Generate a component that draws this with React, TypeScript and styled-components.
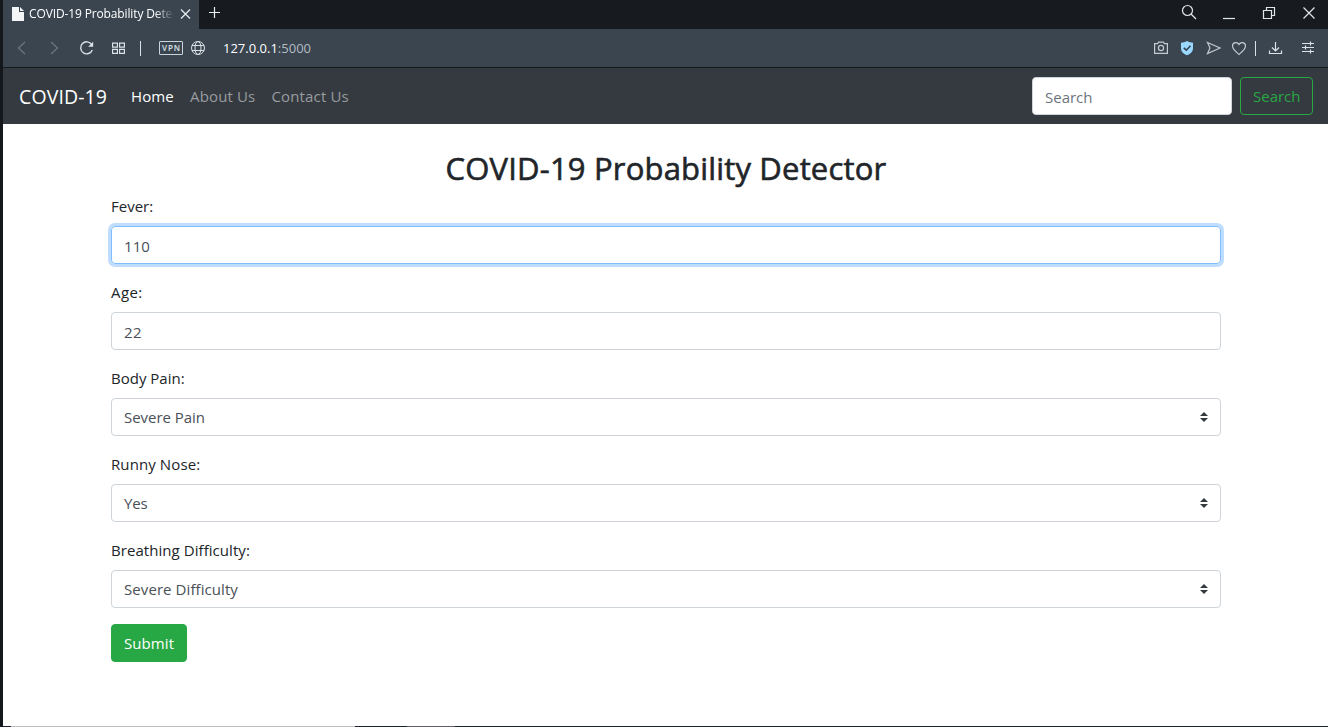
import React from "react";
import styled, { createGlobalStyle } from "styled-components";

const Global = createGlobalStyle`
  *, *::before, *::after { box-sizing: border-box; }
  html, body { margin: 0; padding: 0; background: #fff; overflow: hidden; }
  body { font-family: "Open Sans", "Noto Sans", sans-serif; font-size: 15px; line-height: 24px; color: #212529; }
  svg { display: block; flex-shrink: 0; }
`;

const Window = styled.div`
  width: 1328px;
  height: 727px;
  display: flex;
  flex-direction: column;
  border-left: 3px solid #14181d;
  background: #fff;
`;
const Text = styled.span<{ $ls?: number }>`
  letter-spacing: ${(p) => p.$ls ?? 0}px;
  white-space: pre;
`;

/* Browser chrome */
const TabBar = styled.div`
  height: 29px;
  flex-shrink: 0;
  display: flex;
  justify-content: space-between;
  background: #171b1f;
`;
const TabGroup = styled.div`display: flex;`;
const Tab = styled.div`
  width: 196px;
  display: flex;
  align-items: center;
  padding: 0 7px 2px 9px;
  background: #3a4550;
  color: #fff;
`;
const TabTitle = styled.div`
  width: 146px;
  margin-left: 5px;
  margin-right: 5px;
  font-size: 12px;
  line-height: 18px;
  overflow: hidden;
  mask-image: linear-gradient(90deg, #000 126px, transparent 145px);
`;
const NewTab = styled.div`padding: 6px 0 0 9px;`;
const WindowButtons = styled.div`
  display: flex;
  gap: 16px;
  padding: 1px 7px 0 0;
`;
const Toolbar = styled.div`
  height: 39px;
  flex-shrink: 0;
  display: flex;
  justify-content: space-between;
  background: #3a4550;
  border-bottom: 1px solid #15191c;
`;
const ToolGroup = styled.div`
  display: flex;
  align-items: center;
`;
const Divider = styled.i<{ $l: number; $r: number }>`
  width: 1px;
  height: 15px;
  margin: 0 ${(p) => p.$r}px 0 ${(p) => p.$l}px;
  background: #d9e1e7;
`;
const Vpn = styled.div`
  width: 24px;
  height: 14px;
  border: 1px solid #cbd4da;
  border-radius: 1px;
  color: #dbe2e7;
  font: 600 8px/12px "Open Sans", sans-serif;
  letter-spacing: 0.9px;
  text-align: center;
  padding-left: 1px;
`;
const Url = styled.div`
  margin-left: 9px;
  font-size: 13px;
  line-height: 20px;
  color: #fff;
`;
const Port = styled(Text)`color: #b3bcc4;`;

/* Site navigation */
const Navbar = styled.nav`
  height: 56px;
  flex-shrink: 0;
  display: flex;
  align-items: center;
  padding: 0 15px 0 16px;
  background: #343a40;
`;
const Brand = styled.a`
  width: 88px;
  margin-right: 24px;
  padding-top: 2px;
  font-size: 19.5px;
  line-height: 30px;
  color: #fff;
`;
const NavLink = styled.a<{ $w: number; $active?: boolean }>`
  width: ${(p) => p.$w}px;
  margin-right: 16px;
  color: ${(p) => (p.$active ? "#fff" : "#999c9f")};
`;
const SearchForm = styled.form`
  display: flex;
  gap: 8px;
  margin-left: auto;
`;
const SearchBox = styled.div`
  width: 200px;
  height: 38px;
  padding: 7px 12px;
  border: 1px solid #ced4da;
  border-radius: 4px;
  background: #fff;
  color: #6c757d;
`;
const Button = styled.button<{ $outline?: boolean; $w: number }>`
  display: block;
  width: ${(p) => p.$w}px;
  height: 38px;
  padding: 0 0 0 12px;
  text-align: left;
  border: 1px solid #28a745;
  border-radius: 4px;
  background: ${(p) => (p.$outline ? "transparent" : "#28a745")};
  color: ${(p) => (p.$outline ? "#28a745" : "#fff")};
  font: inherit;
`;

/* Form */
const Page = styled.main`
  flex: 1;
  min-height: 0;
  width: 1110px;
  margin-left: 108px;
  padding-top: 24px;
`;
const Heading = styled.h2`
  margin: 0 0 4px;
  height: 42px;
  font-size: 31px;
  line-height: 41px;
  font-weight: 500;
  -webkit-text-stroke: 0.6px currentColor;
  text-align: center;
`;
const Group = styled.div`margin-bottom: 16px;`;
const Label = styled.label`
  display: block;
  height: 24px;
  margin-bottom: 8px;
`;
const Control = styled.div<{ $focus?: boolean; $select?: boolean }>`
  height: 38px;
  display: flex;
  align-items: center;
  justify-content: space-between;
  padding: ${(p) => (p.$select ? 0 : 2)}px 12px 0;
  border: 1px solid ${(p) => (p.$focus ? "#80bdff" : "#ced4da")};
  border-radius: 4px;
  box-shadow: ${(p) => (p.$focus ? "0 0 0 3px #bfdeff" : "none")};
  color: #495057;
`;
const Footer = styled.div`
  height: 1px;
  flex-shrink: 0;
  display: flex;
  background: #1b2130;
`;
const Segment = styled.i<{ $l: number; $w: number; $c: string }>`
  margin-left: ${(p) => p.$l}px;
  width: ${(p) => p.$w}px;
  background: ${(p) => p.$c};
`;

const Icon = ({ w, h, color = "#dbe2e7", children }: { w: number; h: number; color?: string; children: React.ReactNode }) => (
  <svg width={w} height={h} viewBox={`0 0 ${w} ${h}`} fill="none" stroke={color} strokeWidth="1.2">{children}</svg>
);
const Arrows = () => (
  <svg width="8" height="10" viewBox="0 0 4 5"><path fill="#343a40" d="M2 0L0 2h4zm0 5L0 3h4z" /></svg>
);

const fields = [
  { label: "Fever:", value: "110", focus: true, ll: 0, vl: 0.1 },
  { label: "Age:", value: "22", ll: 0.4, vl: 0.4 },
  { label: "Body Pain:", value: "Severe Pain", select: true, ll: 0, vl: -0.04 },
  { label: "Runny Nose:", value: "Yes", select: true, ll: 0.1, vl: -0.2 },
  { label: "Breathing Difficulty:", value: "Severe Difficulty", select: true, ll: 0.06, vl: 0.08 },
];

export default function App() {
  return (
    <>
      <Global />
      <Window>
        <TabBar>
          <TabGroup>
            <Tab>
              <svg width="12" height="14" viewBox="0 0 12 14"><path fill="#f3f5f6" d="M0 0h7v5h5v9H0z M8 0l4 4H8z" /></svg>
              <TabTitle><Text $ls={-0.13}>COVID-19 Probability Detector</Text></TabTitle>
              <Icon w={13} h={12} color="#e8edf0"><path d="M2 1.500l9 9M11 1.500l-9 9" /></Icon>
            </Tab>
            <NewTab><Icon w={13} h={13} color="#e8edf0"><path d="M6.500 1v11M1 6.500h11" /></Icon></NewTab>
          </TabGroup>
          <WindowButtons>
            <Icon w={24} h={24} color="#e2e6e9"><circle cx="10.500" cy="9.500" r="5" /><path d="M14 13l5 5" /></Icon>
            <Icon w={24} h={24} color="#e2e6e9"><path d="M6 17.500h12" /></Icon>
            <Icon w={24} h={24} color="#e2e6e9"><path d="M6.500 9.500h8v8h-8zM9.500 9.500v-3h8v8h-3" /></Icon>
            <Icon w={24} h={24} color="#e2e6e9"><path d="M6.500 6.500l11 11M17.500 6.500l-11 11" /></Icon>
          </WindowButtons>
        </TabBar>
        <Toolbar>
          <ToolGroup>
            <Icon w={32} h={20} color="#6d7883"><path d="M22 4l-6.500 6 6.500 6" /></Icon>
            <Icon w={35} h={20} color="#6d7883"><path d="M16 4l6.500 6-6.500 6" /></Icon>
            <Icon w={33} h={20}><path strokeWidth="1.400" d="M21.700 6.500A6 6 0 1 0 22.300 12" /><path fill="#dbe2e7" stroke="none" d="M23.200 3.800v5h-5z" /></Icon>
            <Icon w={32} h={20}><path d="M9.600 5.100h4.800v4h-4.800zM16.600 5.100h4.800v4h-4.800zM9.600 11.300h4.800v4h-4.800zM16.600 11.300h4.800v4h-4.800z" /></Icon>
            <Divider $l={5} $r={18} />
            <Vpn>VPN</Vpn>
            <Icon w={31} h={20}><g strokeWidth="1"><circle cx="15" cy="10" r="6.500" /><ellipse cx="15" cy="10" rx="3" ry="6.500" /><path d="M9 7.500h12M9 12.500h12" /></g></Icon>
            <Url><Text $ls={0}>127.0.0.1</Text><Port>:5000</Port></Url>
          </ToolGroup>
          <ToolGroup>
            <Icon w={26} h={20} color="#c3cbd1"><path d="M5.600 5.600h3l1-1.500h4.800l1 1.500h3v9.800H5.600z" /><circle cx="12" cy="10" r="2.600" /></Icon>
            <Icon w={26} h={20}><path fill="#9bd8ff" stroke="none" d="M12 3C14 4.200 16 4.500 18 4.700V10c0 4-3 6-6 7.200C9 16 6 14 6 10V4.700C8 4.500 10 4.200 12 3z" /><path stroke="#34424e" strokeWidth="1.600" d="M8.800 9.800l2.500 2.400 4.200-4.400" /></Icon>
            <Icon w={26} h={20} color="#c3cbd1"><path d="M6.500 4.500L19 10 6.500 15.500 9 10z" /></Icon>
            <Icon w={26} h={20} color="#c3cbd1"><path d="M12 16.500C8 13 5.500 11 5.500 8c0-4 5-4.500 6.500-1.500C13.500 3.500 18.500 4 18.500 8c0 3-2.500 5-6.500 8.500z" /></Icon>
            <Divider $l={2} $r={7} />
            <Icon w={31} h={20}><path d="M12.500 4v8.500M9 9.500l3.500 3.500L16 9.500M6.500 12.500v3h12v-3" /></Icon>
            <Icon w={34} h={20}><path d="M8 5.500h12M8 9.500h12M8 13.500h12M16.500 3.500v4M11.500 7.500v4M16.500 11.500v4" /></Icon>
          </ToolGroup>
        </Toolbar>
        <Navbar>
          <Brand><Text $ls={0.1}>COVID-19</Text></Brand>
          <NavLink $active $w={43}><Text $ls={0.1}>Home</Text></NavLink>
          <NavLink $w={65.5}><Text $ls={0.15}>About Us</Text></NavLink>
          <NavLink $w={78}><Text $ls={0.15}>Contact Us</Text></NavLink>
          <SearchForm>
            <SearchBox><Text>Search</Text></SearchBox>
            <Button type="button" $outline $w={73}><Text>Search</Text></Button>
          </SearchForm>
        </Navbar>
        <Page>
          <Heading><Text $ls={0.18}>COVID-19 Probability Detector</Text></Heading>
          {fields.map((f) => (
            <Group key={f.label}>
              <Label><Text $ls={f.ll}>{f.label}</Text></Label>
              <Control $focus={f.focus} $select={f.select}><Text $ls={f.vl}>{f.value}</Text>{f.select && <Arrows />}</Control>
            </Group>
          ))}
          <Button type="button" $w={76}><Text $ls={0.08}>Submit</Text></Button>
        </Page>
        <Footer>
          <Segment $l={8} $w={344} $c="#bdbdbd" />
          <Segment $l={52} $w={48} $c="#5c6069" />
        </Footer>
      </Window>
    </>
  );
}
